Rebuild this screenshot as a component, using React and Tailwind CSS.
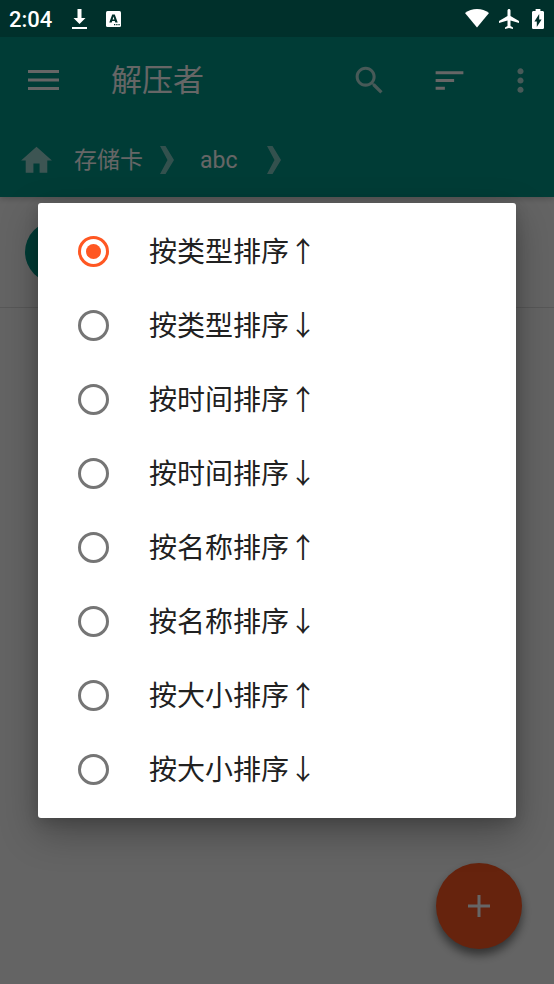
import React, { useState } from "react";

const OPTIONS = [
  "按类型排序↑",
  "按类型排序↓",
  "按时间排序↑",
  "按时间排序↓",
  "按名称排序↑",
  "按名称排序↓",
  "按大小排序↑",
  "按大小排序↓",
];

function StatusBar() {
  return (
    <div className="relative z-20 flex h-[37px] items-center bg-[#00302b] pl-[9px] pr-[10px] text-white">
      <span className="w-[63px] pt-[2px] text-[22px] leading-[26px] font-medium">2:04</span>
      <svg className="h-[20px] w-[15px]" viewBox="0 0 15 20" fill="currentColor" aria-hidden="true">
        <path d="M5.500 0h4v9h4L7.500 15 1.500 9h4zM0 18h15v2H0z" />
      </svg>
      <svg className="ml-[19px] h-[16px] w-[15px]" viewBox="0 0 15 16" aria-hidden="true">
        <rect width="15" height="16" rx="1.5" fill="currentColor" />
        <path
          d="M6.2 3.500h2.600l2.900 8H9.300l-.5-1.500H6.200l-.5 1.500H3.300zM6.600 8.400h1.800L7.500 5.600z"
          fill="#00302b"
          fillRule="evenodd"
        />
        <path d="M8 13h1.3v1.3H8zM10.2 13h1.3v1.3h-1.3zM12.4 13h1.3v1.3h-1.3z" fill="#00302b" />
      </svg>
      <div className="ml-auto flex items-center">
        <svg className="h-[19px] w-[24px]" viewBox="0 0 24 19" fill="currentColor" aria-hidden="true">
          <path d="M0 4C3.5 1.4 7.500 0 12 0s8.500 1.400 12 4L12 18.500z" />
        </svg>
        <svg className="ml-[10px] h-[20px] w-[20px]" viewBox="2 2 20 20" fill="currentColor" aria-hidden="true">
          <path d="M22 16v-2l-8.500-5V3.500c0-.83-.67-1.500-1.500-1.500s-1.500.67-1.500 1.500V9L2 14v2l8.500-2.500V19L8 20.500V22l4-1 4 1v-1.500L13.500 19v-5.500L22 16z" />
        </svg>
        <svg className="ml-[13px] h-[20px] w-[12px]" viewBox="7 2 10 20" preserveAspectRatio="none" fill="currentColor" aria-hidden="true">
          <path d="M15.670 4H14V2h-4v2H8.330C7.600 4 7 4.600 7 5.330v15.330C7 21.400 7.600 22 8.330 22h7.330c.74 0 1.340-.6 1.340-1.330V5.330C17 4.600 16.400 4 15.670 4zM11 20v-5.500H9L13 7v5.500h2L11 20z" />
        </svg>
      </div>
    </div>
  );
}

function ToolIcon({ d }) {
  return (
    <svg className="h-[37px] w-[37px]" viewBox="0 0 24 24" fill="currentColor" aria-hidden="true">
      <path d={d} />
    </svg>
  );
}

function Chevron() {
  return (
    <svg className="h-[28px] w-[14px] text-white/50" viewBox="0 0 14 28" fill="currentColor" aria-hidden="true">
      <path d="M0 0h5.500l8.500 14-8.500 14H0l7.500-14z" />
    </svg>
  );
}

function AppBar() {
  return (
    <header className="relative bg-[#009688] text-white shadow-[0_2px_6px_rgba(0,0,0,0.2)]">
      <div className="flex h-[86px] items-center pl-[28px] pr-[15px]">
        <button type="button" aria-label="菜单" className="w-[83px]">
          <svg className="h-[20px] w-[31px]" viewBox="0 0 31 20" fill="currentColor" aria-hidden="true">
            <path d="M0 0h31v3H0zM0 8.500h31v3H0zM0 17h31v3H0z" />
          </svg>
        </button>
        <h1 className="flex-1 pt-[2px] text-[31px] leading-[36px] font-normal">解压者</h1>
        <button type="button" aria-label="搜索" className="text-white/70">
          <ToolIcon d="M15.500 14h-.79l-.28-.27C15.410 12.590 16 11.110 16 9.500 16 5.910 13.090 3 9.500 3S3 5.910 3 9.500 5.910 16 9.500 16c1.610 0 3.090-.59 4.230-1.570l.27.28v.79l5 4.990L20.490 19l-4.990-5zm-6 0C7.010 14 5 11.990 5 9.500S7.010 5 9.500 5 14 7.010 14 9.500 11.990 14 9.500 14z" />
        </button>
        <button type="button" aria-label="排序" className="ml-[43px]">
          <ToolIcon d="M3 18h6v-2H3v2zM3 6v2h18V6H3zm0 7h12v-2H3v2z" />
        </button>
        <button type="button" aria-label="更多" className="ml-[34px] text-white/70">
          <ToolIcon d="M12 8c1.100 0 2-.9 2-2s-.9-2-2-2-2 .9-2 2 .9 2 2 2zm0 2c-1.100 0-2 .9-2 2s.9 2 2 2 2-.9 2-2-.9-2-2-2zm0 6c-1.100 0-2 .9-2 2s.9 2 2 2 2-.9 2-2-.9-2-2-2z" />
        </button>
      </div>
      <nav className="flex h-[74px] items-center pl-[18px] text-[23px] leading-[28px]">
        <a href="#home" aria-label="主页" className="text-white/60">
          <ToolIcon d="M10 20v-6h4v6h5v-8h3L12 3 2 12h3v8z" />
        </a>
        <a href="#storage" className="ml-[19px] mr-[17px] pt-[2px]">存储卡</a>
        <Chevron />
        <a href="#abc" className="ml-[26px] mr-[30px] pt-[2px]">abc</a>
        <Chevron />
      </nav>
    </header>
  );
}

function SortDialog() {
  const [selected, setSelected] = useState(0);
  return (
    <div className="absolute inset-0 z-10 flex items-center bg-black/60 px-[38px] pt-[37px]">
      <div
        role="dialog"
        aria-label="排序"
        className="w-full rounded-[3px] bg-white pt-[11px] pb-[12px] shadow-[0_14px_38px_rgba(0,0,0,0.3),0_4px_14px_rgba(0,0,0,0.15)]"
      >
        {OPTIONS.map((name, i) => (
          <label key={name} className="flex h-[74px] items-center pl-[40px] text-[28px] leading-[36px] text-[#212121]">
            <input
              type="radio"
              name="sort"
              checked={selected === i}
              onChange={() => setSelected(i)}
              className="mr-[40px] h-[31px] w-[31px] appearance-none rounded-full border-3 border-[#757575] bg-white bg-clip-content p-[5px] checked:border-[#ff5722] checked:bg-[#ff5722]"
            />
            <span className="pt-[3px]">{name}</span>
          </label>
        ))}
      </div>
    </div>
  );
}

export default function App() {
  return (
    <div className="relative flex min-h-screen flex-col bg-[#fafafa] font-[Roboto,'Noto_Sans_CJK_SC',sans-serif]">
      <StatusBar />
      <AppBar />
      <main className="flex-1">
        <div className="flex h-[111px] items-center border-b border-[#dddddd] pl-[25px]">
          <div className="h-[62px] w-[62px] rounded-full bg-[#009688]" />
        </div>
      </main>
      <button
        type="button"
        aria-label="添加"
        className="absolute right-[32px] bottom-[35px] flex h-[86px] w-[86px] items-center justify-center rounded-full bg-[#ff5722] text-white shadow-[0_6px_10px_rgba(0,0,0,0.5)]"
      >
        <svg className="h-[22px] w-[22px]" viewBox="0 0 22 22" fill="currentColor" aria-hidden="true">
          <path d="M9.500 0h3v9.500H22v3h-9.500V22h-3v-9.500H0v-3h9.500z" />
        </svg>
      </button>
      <SortDialog />
    </div>
  );
}
